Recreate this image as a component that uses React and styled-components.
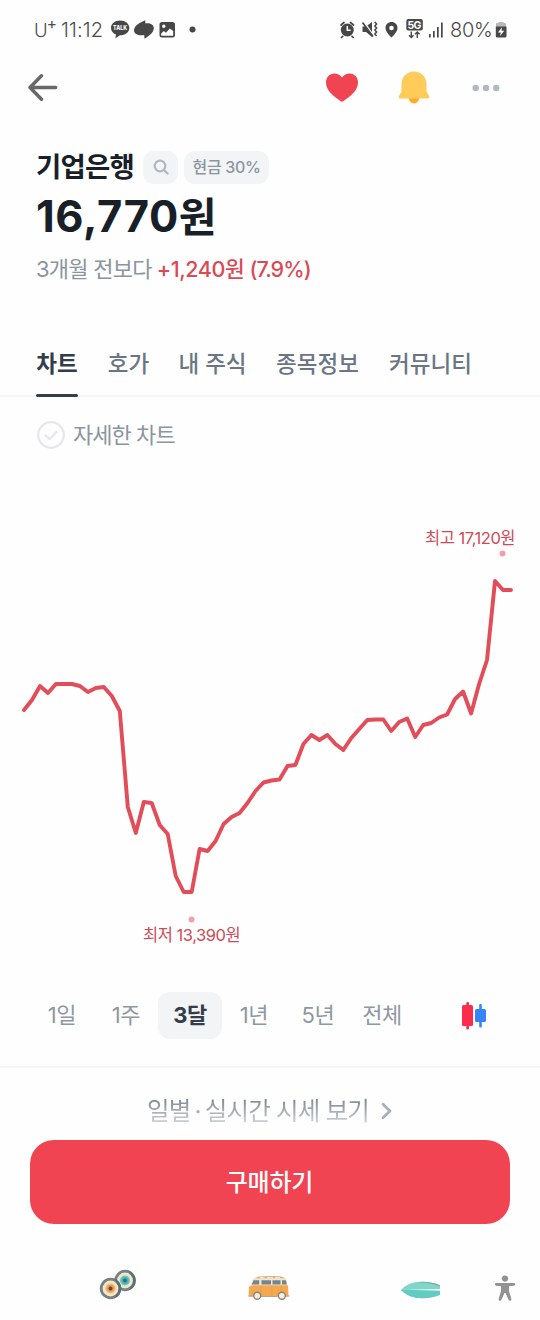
import React from "react";
import styled, { createGlobalStyle } from "styled-components";

const GlobalStyle = createGlobalStyle`
  * {
    box-sizing: border-box;
  }

  body {
    margin: 0;
    background: #fefefe;
    font-family: Inter, "Noto Sans CJK KR", sans-serif;
  }

  button {
    border: none;
    padding: 0;
    background: none;
    font-family: inherit;
  }

  svg {
    display: block;
    flex-shrink: 0;
  }
`;

const Screen = styled.div`
  width: 540px;
  height: 1320px;
  overflow: hidden;
  display: flex;
  flex-direction: column;
`;

const Text = styled.span`
  font-size: ${(p) => p.$size}px;
  font-weight: ${(p) => p.$weight || 400};
  letter-spacing: ${(p) => p.$spacing || 0}px;
  line-height: 1.4;
  color: ${(p) => p.$color || "inherit"};
  white-space: nowrap;
`;

const StatusBar = styled.div`
  height: 60px;
  padding: 0 33px 0 34px;
  display: flex;
  align-items: center;
  justify-content: space-between;
  color: #4b4b4b;
`;

const StatusGroup = styled.div`
  display: flex;
  align-items: center;
`;

const Carrier = styled.div`
  width: 27px;
  display: flex;
  font-size: 18.5px;
  font-weight: 300;
  line-height: 28px;

  sup {
    margin-left: -1px;
    font-size: 15.5px;
    font-weight: 400;
    line-height: 16px;
  }
`;

const Clock = styled.div`
  width: 48px;
  font-size: 20px;
  font-weight: 300;
  line-height: 28px;
  letter-spacing: 0.15px;
`;

const BatteryLevel = styled.div`
  width: 50px;
  padding-left: 5px;
  font-size: 20px;
  font-weight: 300;
  line-height: 28px;
  letter-spacing: -0.3px;
`;

const NavBar = styled.div`
  height: 55px;
  padding: 0 37px 0 27px;
  display: flex;
  align-items: center;
  justify-content: space-between;
`;

const NavActions = styled.div`
  display: flex;
  align-items: center;
  gap: 38px;
`;

const Summary = styled.div`
  height: 216px;
  padding: 34px 36px 0;
  display: flex;
  flex-direction: column;
`;

const TitleRow = styled.div`
  height: 36px;
  display: flex;
  align-items: center;
`;

const StockName = styled.h1`
  width: 107px;
  margin: 0;
  font-size: 27.5px;
  font-weight: 700;
  line-height: 36px;
  letter-spacing: -0.8px;
  white-space: nowrap;
  color: #191f28;
`;

const Badge = styled.div`
  height: 33px;
  width: ${(p) => p.$width}px;
  margin-right: 6px;
  border-radius: 11px;
  background: #f2f4f6;
  display: flex;
  align-items: center;
  justify-content: center;
`;

const Price = styled.div`
  height: 60px;
  padding-top: 1px;
  display: flex;
  align-items: baseline;
  font-size: 43.5px;
  font-weight: 700;
  line-height: 60px;
  letter-spacing: 0.6px;
  color: #191f28;
`;

const Won = styled.span`
  font-size: 41px;
`;

const Change = styled.div`
  height: 48px;
  display: flex;
  align-items: center;
  gap: 5px;
`;

const Tabs = styled.div`
  height: 66px;
  padding: 0 36px;
  display: flex;
  gap: 30px;
  border-bottom: 2px solid #f5f6f7;
`;

const Tab = styled.button`
  height: 66px;
  display: flex;
  flex-direction: column;
  justify-content: space-between;
  align-items: center;
  padding-top: 17px;
  width: ${(p) => p.$width}px;
  font-size: 22.5px;
  line-height: 32px;
  white-space: nowrap;
  font-weight: ${(p) => (p.$active ? 700 : 500)};
  color: ${(p) => (p.$active ? "#333d4b" : "#6b7684")};

  &::after {
    content: "";
    width: 100%;
    height: 3px;
    border-radius: 1.5px;
    background: ${(p) => (p.$active ? "#333d4b" : "transparent")};
  }
`;

const DetailToggle = styled.div`
  height: 76px;
  padding-left: 36px;
  display: flex;
  align-items: center;
  gap: 7px;
`;

const ChartArea = styled.div`
  height: 507px;
  position: relative;
`;

const ChartLabel = styled.span`
  position: absolute;
  left: ${(p) => p.$x}px;
  top: ${(p) => p.$y}px;
  font-size: 16.5px;
  line-height: 22px;
  letter-spacing: -0.46px;
  white-space: nowrap;
  color: #cf4a56;
`;

const Periods = styled.div`
  height: 88px;
  padding: 12px 30px 0;
  display: flex;
  border-bottom: 2px solid #f3f4f5;
`;

const Period = styled.button`
  width: 64px;
  height: 47px;
  flex-shrink: 0;
  border-radius: 12px;
  font-size: 22px;
  line-height: 47px;
  letter-spacing: -0.4px;
  font-weight: ${(p) => (p.$active ? 700 : 400)};
  color: ${(p) => (p.$active ? "#333d4b" : "#8f98a2")};
  background: ${(p) => (p.$active ? "#f2f4f6" : "none")};
`;

const CandleButton = styled.button`
  flex: 1;
  height: 47px;
  display: flex;
  align-items: center;
  justify-content: flex-end;
  padding-right: 22px;
`;

const QuoteLink = styled.div`
  height: 72px;
  padding: 13px 0 0 147px;
  display: flex;
  align-items: center;
`;

const QuoteLabel = styled.div`
  width: 234px;
  display: flex;
  gap: 4px;
`;

const FadedText = styled.span`
  font-size: 24.5px;
  line-height: 34px;
  letter-spacing: -0.8px;
  white-space: nowrap;
  color: transparent;
  background: linear-gradient(#858d96 20%, #d5d8db 92%);
  background-clip: text;
`;

const BuyButton = styled.button`
  height: 84px;
  margin: 0 30px;
  padding: 0 1px 3px 0;
  border-radius: 24px;
  background: #f04452;
  color: #fff;
  font-size: 24px;
  font-weight: 500;
  letter-spacing: -0.2px;
`;

const BottomBar = styled.div`
  height: 96px;
  padding: 44px 0 0 99px;
  display: flex;
`;

const BottomItem = styled.div`
  width: ${(p) => p.$width}px;
  padding-top: ${(p) => p.$drop || 0}px;
`;

const STEP = 487 / 61;
const prices = [
  710, 700, 686, 693, 684, 684, 684, 686, 692, 688, 687, 696, 711, 807, 833, 802,
  803, 825, 834, 876, 892, 892, 849, 851, 841, 824, 817, 813, 803, 791, 782.5, 780.5,
  779.5, 766, 765, 744, 735, 740, 735, 744, 750, 738, 729, 720, 719.5, 719.5, 731, 722,
  718.5, 737, 725, 723, 717.5, 714.5, 699, 691.5, 713.5, 684, 660, 581, 590, 590,
];
const linePoints = prices.map((y, i) => `${(24 + i * STEP).toFixed(1)},${y - 473}`).join(" ");

const tabs = [
  { name: "차트", width: 42 },
  { name: "호가", width: 41 },
  { name: "내 주식", width: 67 },
  { name: "종목정보", width: 83 },
  { name: "커뮤니티", width: 83 },
];
const periods = ["1일", "1주", "3달", "1년", "5년", "전체"];

const LeftStatusIcons = () => (
  <svg width="90" height="24" viewBox="109 18 90 24" fill="#474747">
    <path d="M120 20.500c5.200 0 9.300 3.200 9.300 7.400s-4.100 7.400-9.300 7.400l-4.600 3 .6-3.700c-3-1.300-5-3.700-5-6.700 0-4.200 3.800-7.400 9-7.400z" />
    <text x="120.100" y="30.400" fill="#fff" fontSize="6" fontWeight="800" textAnchor="middle" textLength="14" lengthAdjust="spacingAndGlyphs">TALK</text>
    <path d="M145.300 20.300v3c5-.6 8.500 1.300 8.500 4.700 0 4.500-4 7.500-9.300 10.800l-.3-3.800c-6 .8-10.200-1-10.200-4.600 0-4.500 5.500-7.600 11.300-10.100z" />
    <path fillRule="evenodd" d="M162 22h10.500a2.500 2.500 0 0 1 2.500 2.500V35a2.500 2.500 0 0 1-2.500 2.500H162a2.500 2.500 0 0 1-2.500-2.500V24.500A2.500 2.500 0 0 1 162 22zm-.8 11.500v2.300h12v-4.700l-3.500-2.600-3.700 4.300-2.200-1.800zM163.800 24.600a1.700 1.700 0 1 0 0 3.400 1.700 1.700 0 0 0 0-3.400z" />
    <circle cx="192.500" cy="29.500" r="3" />
  </svg>
);

const RightStatusIcons = () => (
  <svg width="106" height="24" viewBox="339 18 106 24" fill="#474747">
    <g stroke="#474747" strokeWidth="1.700" strokeLinecap="round">
      <path d="M341 25l3-2.500M353.500 25l-3-2.500M342.700 36.300l-1.200 1.200M352 36.300l1.200 1.200" fill="none" />
    </g>
    <circle cx="347.300" cy="30" r="6.500" />
    <path d="M347.300 26v4.300h3.300" fill="none" stroke="#fff" strokeWidth="1.500" />
    <path d="M362.500 26.500h3.500l6-4.500v15l-6-5h-3.500z" />
    <path d="M363.500 21l9.500 14" stroke="#fff" strokeWidth="1.500" />
    <path d="M362.500 22.500l10.500 14" stroke="#474747" strokeWidth="1.700" />
    <path d="M374.800 22l1.800 2-1.800 2 1.800 2-1.800 2 1.800 2-1.800 2 1.800 2" fill="none" stroke="#474747" strokeWidth="1.500" />
    <path fillRule="evenodd" d="M391.500 22c3.500 0 6 2.600 6 5.800 0 4-3.300 7-6 9.800-2.700-2.800-6-5.800-6-9.800 0-3.200 2.500-5.800 6-5.800zm0 3.700a2.300 2.300 0 1 0 0 4.600 2.300 2.300 0 0 0 0-4.600z" />
    <rect x="406.300" y="19" width="16.500" height="11.500" rx="2" />
    <text x="414.500" y="28.500" fill="#fff" fontSize="10.500" fontWeight="700" textAnchor="middle" textLength="14">5G</text>
    <path d="M411.300 31.500v6M409 35.300l2.300 2.300 2.300-2.300M417.300 38v-6M415 34.300l2.300-2.300 2.300 2.300" fill="none" stroke="#474747" strokeWidth="1.400" />
    <path d="M429 34h1.700v3.500h-1.700zM433 31h1.700v6.500h-1.700zM437 27h1.700v10.500h-1.700zM441 22.500h1.700v15h-1.700z" />
  </svg>
);

const BatteryIcon = () => (
  <svg width="12" height="18" viewBox="0 0 12 18">
    <path d="M3.500 2V1h5v1H10a1 1 0 0 1 1 1v3H1V3a1 1 0 0 1 1-1z" fill="#b8b8b8" />
    <path d="M.800 5.500h10.700v9.500a1.500 1.500 0 0 1-1.500 1.500H2.300A1.500 1.500 0 0 1 .8 15z" fill="#474747" />
    <path d="M7 6.300L3 11.500h2.700L5.200 15l4-5.200H6.500z" fill="#fff" />
  </svg>
);

const BackIcon = () => (
  <svg width="32" height="28" viewBox="0 0 32 28" fill="none" stroke="#666967" strokeWidth="3.400" strokeLinecap="round" strokeLinejoin="round">
    <path d="M28.700 13.500H3M14.500 1.800L3 13.500l11.500 11.700" />
  </svg>
);

const HeartIcon = () => (
  <svg width="34" height="32" viewBox="0 0 34 32">
    <path d="M17 5.500C19 2.800 21.700 1.500 24.500 1.500 29.500 1.500 33 5.300 33 10.500c0 8.700-8.800 14.500-14.800 18.700a2 2 0 0 1-2.400 0C9.800 25 1 19.200 1 10.500 1 5.300 4.500 1.500 9.500 1.500c2.800 0 5.500 1.300 7.500 4z" fill="#f04452" />
  </svg>
);

const BellIcon = () => (
  <svg width="34" height="34" viewBox="0 0 34 34">
    <path d="M11.500 26h11a5.500 6.500 0 0 1-11 0z" fill="#ffab2e" />
    <path d="M17 .500C9.500.5 4.500 6.200 4.500 13v7.500l-2.700 4.700c-.6 1.200-.1 2.300 1.200 2.300h28c1.300 0 1.800-1.100 1.200-2.300l-2.700-4.700V13C29.500 6.200 24.500.5 17 .5z" fill="#ffcc59" />
  </svg>
);

const DotsIcon = () => (
  <svg width="34" height="8" viewBox="0 0 34 8" fill="#b0b8c1">
    <circle cx="6.700" cy="4" r="3.200" />
    <circle cx="17" cy="4" r="3.200" />
    <circle cx="27.200" cy="4" r="3.200" />
  </svg>
);

const SearchIcon = () => (
  <svg width="16" height="16" viewBox="0 0 16 16" fill="none" stroke="#b0b8c1" strokeWidth="2.200" strokeLinecap="round">
    <circle cx="7" cy="7" r="5.300" />
    <path d="M11 11l3.500 3.500" />
  </svg>
);

const CheckIcon = () => (
  <svg width="30" height="30" viewBox="0 0 30 30" fill="none" stroke="#e5e8eb" strokeWidth="2.300" strokeLinecap="round" strokeLinejoin="round">
    <circle cx="15" cy="15" r="12.800" />
    <path d="M9.500 15.300l4 3.700 7-7" strokeWidth="2.400" />
  </svg>
);

const CandleIcon = () => (
  <svg width="28" height="30" viewBox="0 0 28 30">
    <rect x="2" y="4" width="11" height="21" rx="1.500" fill="#fb2d4b" />
    <rect x="6.300" y="1" width="2.700" height="27.500" rx="1" fill="#fb2d4b" />
    <rect x="15" y="8" width="11" height="13" rx="1.500" fill="#3485fa" />
    <rect x="19.200" y="3" width="2.600" height="23.500" rx="1" fill="#3485fa" />
  </svg>
);

const ChevronIcon = () => (
  <svg width="12" height="18" viewBox="0 0 12 18" fill="none" stroke="#a9afb6" strokeWidth="2.800" strokeLinecap="round" strokeLinejoin="round">
    <path d="M2 2.300l7 6.700-7 6.700" />
  </svg>
);

const Wheel = ({ x, y, color, core, hub }) => (
  <g transform={`translate(${x} ${y})`}>
    <circle r="10.700" fill="#72828a" />
    <path d="M3-10.300a10.700 10.700 0 0 1 0 20.600A15 15 0 0 0 3-10.300z" fill="#5d6e77" />
    <circle r="7.900" fill="#f4e6c0" />
    <circle r="5" fill={color} />
    <circle r="3.400" fill={core} />
    <circle r="2" fill={hub} />
  </g>
);

const WheelsIcon = () => (
  <svg width="40" height="34" viewBox="0 0 40 34">
    <Wheel x={26} y={12.500} color="#62c9c9" core="#48b5b8" hub="#396d7c" />
    <Wheel x={11.500} y={20.500} color="#f6b36e" core="#e69857" hub="#5e4b45" />
  </svg>
);

const VanIcon = () => (
  <svg width="46" height="34" viewBox="0 0 46 34">
    <path d="M5.500 11.500c1-3.500 3-5.500 6-5.800 9-.8 17-.8 24.500 0 3.500.3 4.500 2 4.800 4.800l.7 9H3.500c0-3.500.8-5.500 2-8z" fill="#f1e6cf" />
    <path d="M12 5.700c8-.8 17-.8 24 0l2.500 1.500H9.500z" fill="#d9b07c" />
    <path d="M14 6h4.500v1.500H14zM21 6h6v1.500h-6zM29 6h5v1.500h-5z" fill="#efe5d2" />
    <path d="M3 15.500l4-1.200h35l.5 9.700c0 1-.7 1.800-1.500 1.800H4.500c-1.200 0-1.800-1-1.800-2.500z" fill="#f4a951" />
    <path d="M7.500 9.300h5.700v4.200H5.800zM15.500 9.300H25v4.200h-9.500zM26.500 9.300h8v4.200h-8zM36 9.300h4l.8 4.200H36z" fill="#748590" />
    <path d="M15 14.500v10M25.800 14.500v10M35 14.500v7" stroke="#e39542" strokeWidth=".6" />
    <path d="M2 25h5M15 25.500h16M39 25h4.500" stroke="#b7a48f" strokeWidth="1" />
    <circle cx="11.200" cy="24.800" r="4.200" fill="#8a847b" />
    <circle cx="11.200" cy="24.800" r="2.800" fill="#f1eee4" />
    <circle cx="35.800" cy="24.800" r="4.200" fill="#8a847b" />
    <circle cx="35.800" cy="24.800" r="2.800" fill="#f1eee4" />
  </svg>
);

const BoardIcon = () => (
  <svg width="42" height="34" viewBox="0 0 42 34">
    <path d="M1 18c5-5.500 12-8.200 20-8.200 8 0 14 1.500 19 3.700v9.300C35 25 29 26.200 22 26.200 13.500 26.200 6.500 23.500 1 18z" fill="#7fd6c9" />
    <path d="M1 18h39v4.800C35 25 29 26.200 22 26.200 13.500 26.200 6.500 23.500 1 18z" fill="#62cbc2" />
    <path d="M15 10.400c8-1.500 18-.8 25 3.100v1C32 11.500 24 10 15 10.400z" fill="#78aaa1" />
    <path d="M6 17.800l34-.8v1.700z" fill="#ecf9f5" />
  </svg>
);

const PersonIcon = () => (
  <svg width="22" height="34" viewBox="0 0 22 34" fill="#929292">
    <circle cx="11" cy="6.600" r="3.100" />
    <path d="M2.200 11h17.600a1.300 1.300 0 0 1 0 2.700l-4.800.6v4.700l2.300 8a1.400 1.400 0 0 1-2.600 1L11.500 21h-1L7.300 28a1.400 1.400 0 0 1-2.600-1L7 19v-4.700l-4.800-.6a1.300 1.300 0 0 1 0-2.700z" />
  </svg>
);

export default function App() {
  return (
    <>
      <GlobalStyle />
      <Screen>
        <StatusBar>
          <StatusGroup>
            <Carrier>
              U<sup>+</sup>
            </Carrier>
            <Clock>11:12</Clock>
            <LeftStatusIcons />
          </StatusGroup>
          <StatusGroup>
            <RightStatusIcons />
            <BatteryLevel>80%</BatteryLevel>
            <BatteryIcon />
          </StatusGroup>
        </StatusBar>

        <NavBar>
          <BackIcon />
          <NavActions>
            <HeartIcon />
            <BellIcon />
            <DotsIcon />
          </NavActions>
        </NavBar>

        <Summary>
          <TitleRow>
            <StockName>기업은행</StockName>
            <Badge $width={35}>
              <SearchIcon />
            </Badge>
            <Badge $width={85}>
              <Text $size={16} $weight={500} $spacing={-0.35} $color="#8b95a1">현금 30%</Text>
            </Badge>
          </TitleRow>
          <Price>
            16,770<Won>원</Won>
          </Price>
          <Change>
            <Text $size={22} $spacing={-0.75} $color="#8b95a1">3개월 전보다</Text>
            <Text $size={21.5} $weight={500} $spacing={-0.4} $color="#dc4955">+1,240원</Text>
            <Text $size={21.5} $weight={500} $spacing={-0.9} $color="#dc4955">(7.9%)</Text>
          </Change>
        </Summary>

        <Tabs>
          {tabs.map((tab, i) => (
            <Tab key={tab.name} $width={tab.width} $active={i === 0}>{tab.name}</Tab>
          ))}
        </Tabs>

        <DetailToggle>
          <CheckIcon />
          <Text $size={22} $spacing={-0.95} $color="#8b95a1">자세한 차트</Text>
        </DetailToggle>

        <ChartArea>
          <svg width="540" height="507" viewBox="0 0 540 507">
            <polyline points={linePoints} fill="none" stroke="#e34c59" strokeWidth="3.900" strokeLinecap="round" strokeLinejoin="round" />
            <circle cx="502.500" cy="80.500" r="3" fill="#f1a1aa" />
            <circle cx="191.500" cy="446.500" r="3" fill="#f1a1aa" />
          </svg>
          <ChartLabel $x={425} $y={54}>최고 17,120원</ChartLabel>
          <ChartLabel $x={143} $y={451}>최저 13,390원</ChartLabel>
        </ChartArea>

        <Periods>
          {periods.map((period) => (
            <Period key={period} $active={period === "3달"}>{period}</Period>
          ))}
          <CandleButton>
            <CandleIcon />
          </CandleButton>
        </Periods>

        <QuoteLink>
          <QuoteLabel>
            <FadedText>일별</FadedText>
            <FadedText>·</FadedText>
            <FadedText>실시간 시세 보기</FadedText>
          </QuoteLabel>
          <ChevronIcon />
        </QuoteLink>

        <BuyButton>구매하기</BuyButton>

        <BottomBar>
          <BottomItem $width={147}>
            <WheelsIcon />
          </BottomItem>
          <BottomItem $width={154} $drop={3}>
            <VanIcon />
          </BottomItem>
          <BottomItem $width={94} $drop={4}>
            <BoardIcon />
          </BottomItem>
          <BottomItem $width={22} $drop={4}>
            <PersonIcon />
          </BottomItem>
        </BottomBar>
      </Screen>
    </>
  );
}
